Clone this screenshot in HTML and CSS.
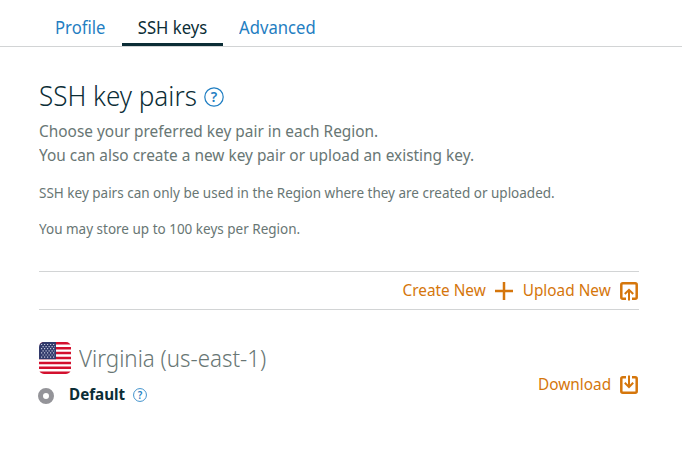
FILE: index.html
```html
<!DOCTYPE html>
<html lang="en">
<head>
<meta charset="utf-8">
<title>SSH keys</title>
<link rel="stylesheet" href="styles.css">
</head>
<body>
<nav class="tabs">
  <a class="tab tab-profile"><span>Profile</span></a>
  <a class="tab tab-ssh active"><span>SSH keys</span></a>
  <a class="tab tab-advanced"><span>Advanced</span></a>
</nav>
<main class="page">
  <h1 class="title"><span>SSH key pairs</span>
    <svg class="help" viewBox="0 0 20 20"><circle cx="10" cy="10" r="9.2"/><text x="10" y="15">?</text></svg>
  </h1>
  <p class="lead">Choose your preferred key pair in each Region.<br>You can also create a new key pair or upload an existing key.</p>
  <p class="note">SSH key pairs can only be used in the Region where they are created or uploaded.</p>
  <p class="note">You may store up to 100 keys per Region.</p>
  <div class="toolbar">
    <a class="action create"><span>Create New</span>
      <svg class="plus" viewBox="0 0 18 18"><path d="M9 0v18M0 9h18"/></svg></a>
    <a class="action upload"><span>Upload New</span>
      <svg class="icon" viewBox="0 0 18 18"><path d="M6 16.7H2.8Q1.3 16.7 1.3 15.2V2.8Q1.3 1.3 2.8 1.3H15.2Q16.7 1.3 16.7 2.8V15.2Q16.7 16.7 15.2 16.7H12"/><path class="arrow" d="M9 18.5V8M4.8 12L9 7.8L13.2 12"/></svg></a>
  </div>
  <section class="region">
    <div class="region-info">
      <div class="region-name">
        <svg class="flag" viewBox="0 0 32 32">
          <rect width="32" height="32" fill="#fff"/>
          <path class="stripes" d="M0 1.23H32M0 6.15H32M0 11.08H32M0 16H32M0 20.92H32M0 25.85H32M0 30.77H32"/>
          <rect width="17" height="17.2" fill="#323a6b"/>
          <path class="stars" d="M2 2.5H17M3.5 4.6H16M2 6.7H17M3.5 8.8H16M2 10.9H17M3.5 13H16M2 15.1H17"/>
        </svg>
        <span>Virginia (us-east-1)</span>
      </div>
      <label class="key"><i class="radio"></i><b>Default</b>
        <svg class="help small" viewBox="0 0 20 20"><circle cx="10" cy="10" r="9.2"/><text x="10" y="15">?</text></svg></label>
    </div>
    <a class="action download"><span>Download</span>
      <svg class="icon" viewBox="0 0 18 18"><path d="M6 1.3H2.8Q1.3 1.3 1.3 2.8V15.2Q1.3 16.7 2.8 16.7H15.2Q16.7 16.7 16.7 15.2V2.8Q16.7 1.3 15.2 1.3H12"/><path class="arrow" d="M9 -.5V10.5M4.8 6.8L9 11L13.2 6.8"/></svg></a>
  </section>
</main>
</body>
</html>
```
FILE: styles.css
```css
* { box-sizing: border-box; }
body { margin: 0; background: #fff; color: #0b2d36; font-family: "Noto Sans", "Open Sans", sans-serif; font-size: 16px; }
svg { display: block; flex: none; overflow: visible; }
span, b { white-space: nowrap; }
.tabs { display: flex; height: 47px; padding-left: 39px; border-bottom: 1px solid #d2d4d5; }
.tab { display: flex; justify-content: center; height: 46px; line-height: 54px; font-size: 18px; color: #1f7ec2; }
.tab span { transform: scaleX(.925); }
.tab-profile { width: 83px; }
.tab-ssh { width: 101px; }
.tab-advanced { width: 108px; }
.tab.active { color: #0b2d36; border-bottom: 3px solid #0b2d36; }
.page { width: 600px; margin-left: 39px; }
.title { display: flex; align-items: center; gap: 8px; height: 36px; margin: 30px 0 6px; font-size: 28px; font-weight: 300; }
.title span { margin: -1px -13px 0 0; transform: scaleX(.93); transform-origin: left; }
.help { width: 20px; height: 20px; margin-top: 3px; }
.help circle { fill: none; stroke: #1f7ec2; stroke-width: 1.2; }
.help text { fill: #1f7ec2; font-size: 14px; font-weight: 600; text-anchor: middle; }
.lead { margin: 0; line-height: 24px; color: #687674; transform: scaleX(.963); transform-origin: left; }
.note { margin: 16px 0; font-size: 14px; line-height: 20px; color: #687674; transform: scaleX(.964); transform-origin: left; }
.toolbar { display: flex; justify-content: flex-end; align-items: center; gap: 9px; height: 39px; margin-top: 32px; padding-right: 1px; border: solid #d2d4d5; border-width: 1px 0; }
.action { display: flex; align-items: center; gap: 9px; color: #d5760b; }
.action span { margin: -2px 0 0 -3px; transform: scaleX(.96); transform-origin: right; }
.action path { fill: none; stroke: #d5760b; stroke-width: 2.5; }
.action .arrow { stroke-width: 2; }
.plus, .icon { width: 18px; height: 18px; }
.region { display: flex; justify-content: space-between; align-items: center; margin-top: 32px; }
.download { margin: 21px 1px 0 0; }
.region-name { display: flex; align-items: center; gap: 8px; height: 32px; color: #687674; font-size: 24px; font-weight: 300; }
.region-name span { margin-top: -2px; transform: scaleX(.93); transform-origin: left; }
.flag { width: 32px; height: 32px; border-radius: 5px; overflow: hidden; }
.stripes { stroke: #d3102e; stroke-width: 2.46; }
.stars { stroke: #c5c9dc; stroke-width: 1.2; stroke-dasharray: 1.2 1.8; }
.key { display: flex; align-items: center; height: 24px; margin-top: 8px; }
.key b { margin-right: -3px; transform: scaleX(.95); transform-origin: left; }
.radio { width: 16px; height: 16px; margin: 3px 15px 0 -1px; border: 5px solid #949499; border-radius: 50%; }
.help.small { width: 14px; height: 14px; margin: 2px 0 0 8px; }
```
